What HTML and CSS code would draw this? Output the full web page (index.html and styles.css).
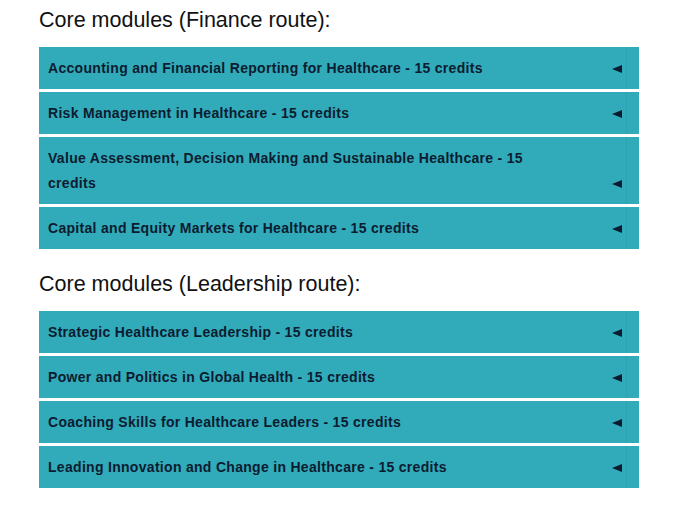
FILE: index.html
```html
<!DOCTYPE html>
<html lang="en">
<head>
  <meta charset="UTF-8">
  <title>Core modules</title>
  <link rel="stylesheet" href="styles.css">
</head>
<body>

  <div class="page">
    <h2>Core modules (Finance route):</h2>

    <div class="modules">
      <div class="module"><span>Accounting and Financial Reporting for Healthcare - 15 credits</span><i class="arrow"></i></div>
      <div class="module"><span>Risk Management in Healthcare - 15 credits</span><i class="arrow"></i></div>
      <div class="module"><span>Value Assessment, Decision Making and Sustainable Healthcare - 15 credits</span><i class="arrow"></i></div>
      <div class="module"><span>Capital and Equity Markets for Healthcare - 15 credits</span><i class="arrow"></i></div>
    </div>

    <h2>Core modules (Leadership route):</h2>

    <div class="modules">
      <div class="module"><span>Strategic Healthcare Leadership - 15 credits</span><i class="arrow"></i></div>
      <div class="module"><span>Power and Politics in Global Health - 15 credits</span><i class="arrow"></i></div>
      <div class="module"><span>Coaching Skills for Healthcare Leaders - 15 credits</span><i class="arrow"></i></div>
      <div class="module"><span>Leading Innovation and Change in Healthcare - 15 credits</span><i class="arrow"></i></div>
    </div>
  </div>

</body>
</html>
```

FILE: styles.css
```css
*{
margin: 0;
padding: 0;
box-sizing: border-box;
font-family: 'Liberation Sans', Arial, sans-serif;
}

body{
background: #fff;
}

.page{
width: 600px;
margin-left: 39px;
padding-top: 8px;
}

h2{
font-size: 21.5px;
font-weight: normal;
line-height: 24px;
color: #111;
margin-bottom: 15px;
}

.modules{
margin-bottom: 23px;
}

.module{
display: flex;
align-items: flex-end;
justify-content: space-between;
background: linear-gradient(to left, #31aab9 12px, #2ea2b0 12px, #2ea2b0 13px, #31aab9 13px);
color: #0c1c30;
font-size: 14px;
letter-spacing: 0.3px;
font-weight: bold;
line-height: 25px;
padding: 9px 17px 8px 9px;
margin-bottom: 3px;
}

.module span{
max-width: 490px;
}

/* left-pointing triangle */
.arrow{
display: block;
width: 0;
height: 0;
border-top: 4.5px solid transparent;
border-bottom: 4.5px solid transparent;
border-right: 10px solid #0c1c30;
margin-bottom: 8px;
}
```
